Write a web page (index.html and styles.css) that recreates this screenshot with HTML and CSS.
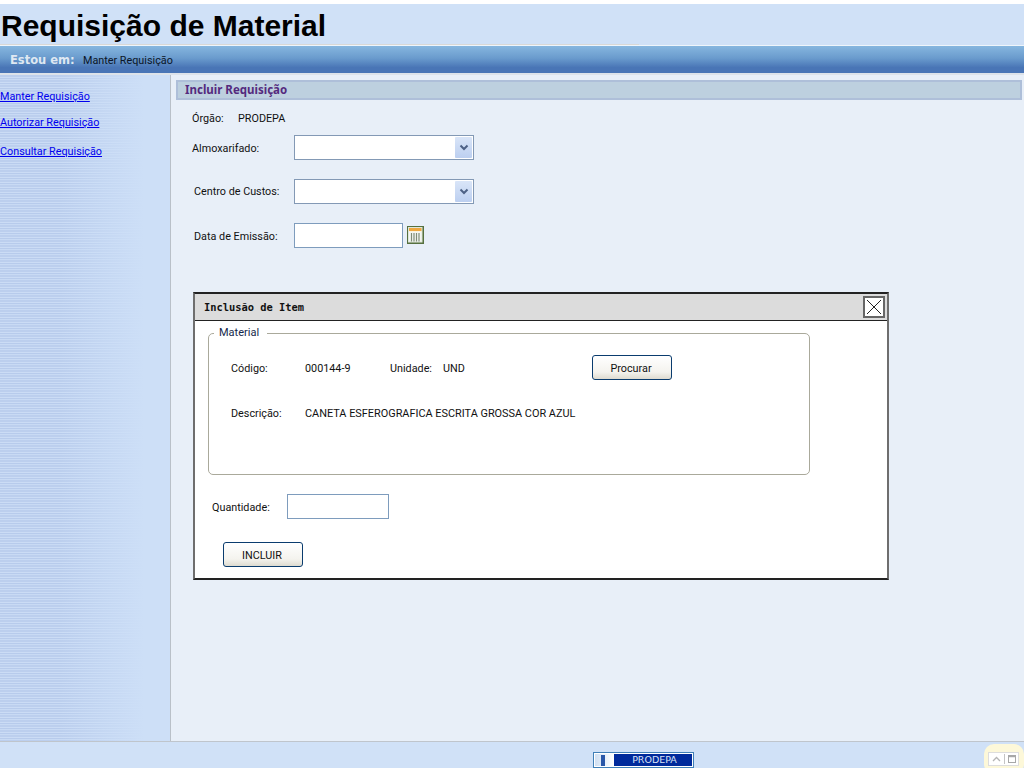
FILE: index.html
```html
<!DOCTYPE html>
<html lang="pt">
<head>
<meta charset="utf-8">
<title>Requisição de Material</title>
<link rel="stylesheet" href="styles.css">
</head>
<body>
<div class="page">
  <header class="title-band"><h1>Requisição de Material</h1></header>
  <div class="crumb"><strong>Estou em:</strong><span>Manter Requisição</span></div>
  <div class="middle">
    <nav class="side">
      <a href="#" class="l1">Manter Requisição</a>
      <a href="#" class="l2">Autorizar Requisição</a>
      <a href="#" class="l3">Consultar Requisição</a>
    </nav>
    <main class="content">
      <h2 class="section">Incluir Requisição</h2>
      <div class="orgao"><span class="w-orgao">Órgão:</span><span>PRODEPA</span></div>
      <div class="row r-almox"><label class="lab down">Almoxarifado:</label><div class="select"><span class="arrow"><svg width="10" height="7" viewBox="0 0 10 7"><path d="M1.500 1.500 5 5l3.500-3.500" fill="none" stroke="#4d6185" stroke-width="2"/></svg></span></div></div>
      <div class="row r-centro"><label class="lab lab2">Centro de Custos:</label><div class="select"><span class="arrow"><svg width="10" height="7" viewBox="0 0 10 7"><path d="M1.500 1.500 5 5l3.500-3.500" fill="none" stroke="#4d6185" stroke-width="2"/></svg></span></div></div>
      <div class="row r-data"><label class="lab lab2 down">Data de Emissão:</label><div class="input date"></div>
        <svg class="cal" width="17" height="18" viewBox="0 0 17 18"><rect width="17" height="18" fill="#56703f"/><rect x="1" y="1" width="14.500" height="15.500" fill="#dfe7da"/><rect x="2" y="2" width="12.500" height="3" fill="#efa83f"/><rect x="2" y="5" width="12.500" height="1" fill="#fbf3dc"/><rect x="2" y="6" width="12.500" height="9.500" fill="#f4f6f2"/><path d="M4.500 7v8.500M7 7v8.500M9.500 7v8.500M12 7v8.500" stroke="#7f8c77" stroke-width="1.200" fill="none"/></svg>
      </div>
      <section class="dialog">
        <div class="dialog-head"><span>Inclusão de Item</span>
          <button class="close" type="button" aria-label="Fechar"><svg width="16" height="16" viewBox="0 0 16 16"><path d="M1 1l14 14M15 1 1 15" stroke="#222" stroke-width="1" fill="none"/></svg></button>
        </div>
        <div class="dialog-body">
          <fieldset class="material">
            <legend>Material</legend>
            <div class="m-row one"><span class="k">Código:</span><span class="code">000144-9</span><span class="uni">Unidade:</span><span>UND</span><button type="button" class="btn procurar">Procurar</button></div>
            <div class="m-row two"><span class="k">Descrição:</span><span class="desc">CANETA ESFEROGRAFICA ESCRITA GROSSA COR AZUL</span></div>
          </fieldset>
          <div class="qty"><label class="down">Quantidade:</label><div class="input q"></div></div>
          <button type="button" class="btn incluir">INCLUIR</button>
        </div>
      </section>
    </main>
  </div>
  <footer class="foot">
    <div class="badge"><span class="logo"><i></i></span><span class="badge-text">PRODEPA</span></div>
    <div class="tray"><span class="tray-in"><svg width="29" height="12" viewBox="0 0 29 12"><path d="M4 8l3.500-3.500L11 8" fill="none" stroke="#b5b5b5" stroke-width="1.300"/><path d="M15.500 1v10" stroke="#c4c4c4"/><rect x="19.500" y="2.500" width="7" height="7" fill="none" stroke="#a8a8a8"/><path d="M20 3.500h6" stroke="#a8a8a8" stroke-width="1.500"/></svg></span></div>
  </footer>
</div>
</body>
</html>
```
FILE: styles.css
```css
* { box-sizing: border-box; }
html, body { margin: 0; padding: 0; }
body { font-family: Roboto, "Noto Sans", sans-serif; font-size: 10.800px; color: #111; background: #fff; }
.page { width: 1024px; height: 768px; overflow: hidden; display: flex; flex-direction: column; padding-top: 4px; }
.title-band { height: 42px; flex: none; background: #d0e1f7; border-bottom: 1px solid #eff5fb; }
h1 { margin: 0; width: 639px; height: 41px; padding: 4px 0 0 1px; border-bottom: 1px solid #d9d8d6; font: bold 30px/36px "Liberation Sans", Arial, sans-serif; color: #000; }
.crumb { height: 27px; flex: none; display: flex; align-items: center; padding: 1px 0 0 10px; background: linear-gradient(#86b6df, #6a9bcd 45%, #4975b6 80%, #4975b6); color: #0b1526; }
.crumb strong { font: bold 11.500px "DejaVu Sans", sans-serif; color: #dfe8f2; width: 73px; }
.middle { flex: 1; display: flex; min-height: 0; border-top: 2px solid #dde3ea; }
.side { width: 171px; flex: none; border-right: 1px solid #b9c0c8; display: flex; flex-direction: column; background: linear-gradient(90deg, rgba(205, 223, 247, 0) 0, rgba(205, 223, 247, 0) 35%, #cddff7 85%), repeating-linear-gradient(#bccfee 0 2px, #cbdcf5 2px 3px, #b7cbec 3px 4px, #c8daf4 4px 5px); }
.side a { color: #0000ee; line-height: 14px; }
.l1 { margin-top: 15px; }
.l2 { margin-top: 12px; }
.l3 { margin-top: 15px; }
.content { flex: 1; background: #e8eff8; padding: 5px 2px 0 5px; min-width: 0; }
.section { margin: 0; height: 20px; font: bold 11.500px/16px "Noto Sans", sans-serif; color: #542a7e; background: #bdd0df; border: 2px solid #aebfd9; padding-left: 7px; }
.orgao { margin: 12px 0 0 16px; display: flex; line-height: 14px; }
.w-orgao { width: 46px; }
.row { display: flex; align-items: center; margin-left: 16px; }
.r-almox { margin-top: 9px; }
.r-centro { margin-top: 19px; }
.r-data { margin-top: 19px; }
.lab { width: 102px; }
.lab2 { padding-left: 2px; }
.down { padding-top: 2px; }
.select { width: 180px; height: 25px; background: #fff; border: 1px solid #8399b5; display: flex; justify-content: flex-end; padding: 1px; }
.arrow { width: 17px; display: flex; align-items: center; justify-content: center; background: linear-gradient(#d9e5f8, #bccff0); border-radius: 1px; }
.input { background: #fff; border: 1px solid #7e9cbd; height: 25px; }
.date { width: 109px; }
.cal { margin: -2px 0 0 4px; }
.dialog { width: 696px; height: 288px; margin: 44px 0 0 17px; background: #fff; border: 2px solid #6e6e6e; border-top-color: #222; border-bottom-color: #222; }
.dialog-head { height: 27px; background: #dcdcdc; border-bottom: 1px solid #222; display: flex; align-items: center; justify-content: space-between; padding: 0 2px 0 9px; font: bold 10.400px "DejaVu Sans Mono", monospace; color: #111; }
.close { width: 22px; height: 22px; padding: 0; background: #fff; border: 2px solid #666; display: flex; align-items: center; justify-content: center; }
.dialog-body { padding: 5px 0 0 13px; }
.material { margin: 0; width: 602px; height: 149px; padding: 0 0 0 22px; border: 1px solid #aaa99b; border-radius: 5px; }
.material legend { padding: 0 8px 0 5px; margin-left: -17px; line-height: 14px; font-size: 11px; color: #14284b; }
.m-row { display: flex; align-items: center; line-height: 14px; }
.one { margin-top: 15px; height: 25px; }
.one span { padding-top: 2px; }
.two { margin-top: 27px; }
.desc { font-size: 10.900px; }
.k { width: 74px; }
.code { width: 85px; }
.uni { width: 53px; }
.btn { font: 10.800px Roboto, "Noto Sans", sans-serif; color: #111; width: 80px; height: 25px; padding: 2px 2px 0 0; border: 1px solid #0a3c6e; border-radius: 3px; background: linear-gradient(#fff, #f4f3ee 70%, #dedbd0); }
.procurar { margin: 0 137px 0 auto; }
.qty { display: flex; align-items: center; margin: 19px 0 0 4px; }
.qty label { width: 75px; }
.q { width: 102px; }
.incluir { display: block; margin: 23px 0 0 15px; }
.foot { height: 27px; flex: none; background: #d0e1f7; border-top: 1px solid #bfc5cc; position: relative; display: flex; }
.badge { margin: 10px 0 0 593px; width: 101px; height: 16px; border: 1px solid #3f7fb8; background: #fff; display: flex; padding: 1px; }
.logo { width: 19px; position: relative; background: linear-gradient(90deg, #cfdff2, #fff); }
.logo i { position: absolute; left: 6px; top: 1px; width: 4px; height: 11px; background: #2a57a8; }
.badge-text { flex: 1; background: #002a9c; color: #d8e2f7; font: 9.500px/12px "DejaVu Sans", sans-serif; text-align: center; padding-left: 3px; }
.tray { position: absolute; right: 0; top: 2px; width: 40px; height: 30px; background: #fdf8d9; border-radius: 10px; padding: 9px 0 0 5px; }
.tray-in { display: block; width: 29px; height: 12px; background: #fff; outline: 1px solid #ddd; }
.tray-in svg { display: block; }
```
